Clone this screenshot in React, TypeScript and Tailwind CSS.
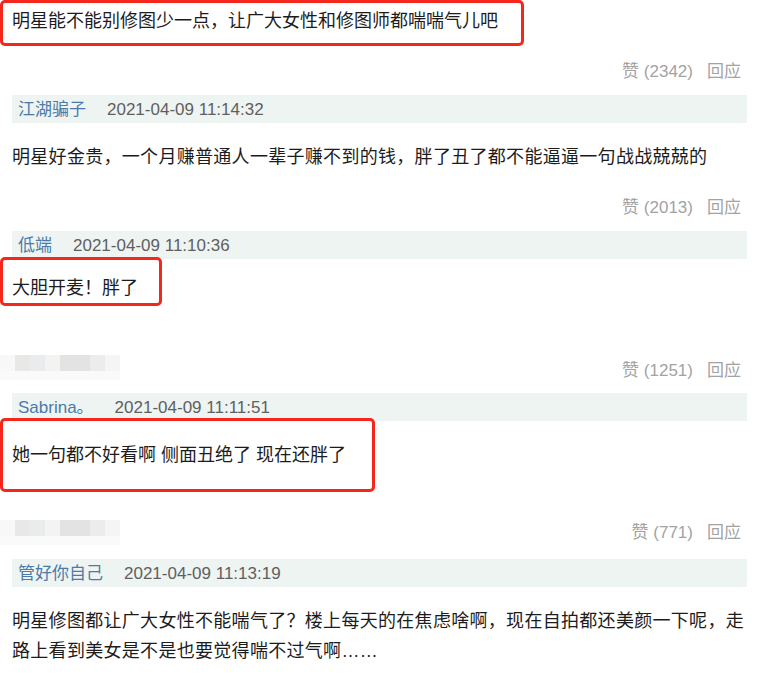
import React from "react";

const font = { fontFamily: '"Liberation Sans", "Noto Sans CJK SC", sans-serif' };

function Likes({ count }: { count: string }) {
  return (
    <div className="flex h-[20px] items-center gap-[14px] text-[17px] leading-none text-[#a3a3a3]">
      <span>赞 ({count})</span>
      <span>回应</span>
    </div>
  );
}

function Bar({ name, time }: { name: string; time: string }) {
  return (
    <div className="ml-[12px] flex h-[28px] w-[735px] items-center gap-[21px] bg-[#eef4f1] pl-[6px] text-[17px] leading-none">
      <span className="text-[#4b7bab]">{name}</span>
      <span className="text-[#5f5f5f]">{time}</span>
    </div>
  );
}

function Mosaic() {
  const top = ["#f8f8f8", "#e8e8e6", "#eaebed", "#f3f3f1", "#e3e3e3", "#e3e3e3", "#ececec", "#f4f5f4"];
  return (
    <div className="mt-[3px] flex flex-col">
      <div className="flex h-[16px]">
        {top.map((c, i) => (
          <div key={i} className="h-full w-[15px]" style={{ background: c }} />
        ))}
      </div>
      <div className="h-[9px] w-[120px] bg-[#fafafa]" />
    </div>
  );
}

export default function App() {
  return (
    <div className="h-[676px] w-[765px] overflow-hidden bg-white text-[#1c1c1c]" style={font}>
      <div className="flex h-[46px] w-[524px] items-center rounded-[5px] border-[3px] border-[#f5261c] pb-[4px] pl-[9px] text-[18px]">
        明星能不能别修图少一点，让广大女性和修图师都喘喘气儿吧
      </div>

      <div className="mt-[15px] flex justify-end pr-[24px]">
        <Likes count="2342" />
      </div>
      <div className="mt-[14px]">
        <Bar name="江湖骗子" time="2021-04-09 11:14:32" />
      </div>
      <div className="mt-[19px] flex h-[30px] items-center pl-[12px] text-[18px] tracking-[0.3px]">
        明星好金贵，一个月赚普通人一辈子赚不到的钱，胖了丑了都不能逼逼一句战战兢兢的
      </div>

      <div className="mt-[25px] flex justify-end pr-[24px]">
        <Likes count="2013" />
      </div>
      <div className="mt-[14px]">
        <Bar name="低端" time="2021-04-09 11:10:36" />
      </div>
      <div className="mt-[-2px] flex h-[49px] w-[162px] items-end rounded-[5px] border-[3px] border-[#f5261c] pb-[1px] pl-[9px] text-[18px]">
        大胆开麦！胖了
      </div>

      <div className="mt-[46px] flex items-start justify-between pr-[24px]">
        <Mosaic />
        <div className="mt-[8px]">
          <Likes count="1251" />
        </div>
      </div>
      <div className="mt-[13px]">
        <Bar name="Sabrina。" time="2021-04-09 11:11:51" />
      </div>
      <div className="mt-[-3px] flex h-[74px] w-[375px] items-center rounded-[5px] border-[3px] border-[#f5261c] pl-[9px] text-[18px]">
        她一句都不好看啊 侧面丑绝了 现在还胖了
      </div>

      <div className="mt-[25px] flex items-start justify-between pr-[24px]">
        <Mosaic />
        <div className="mt-[5px]">
          <Likes count="771" />
        </div>
      </div>
      <div className="mt-[14px]">
        <Bar name="管好你自己" time="2021-04-09 11:13:19" />
      </div>
      <p className="mt-[19px] w-[752px] pl-[12px] text-[18px] leading-[30px] tracking-[0.3px]">
        明星修图都让广大女性不能喘气了？楼上每天的在焦虑啥啊，现在自拍都还美颜一下呢，走路上看到美女是不是也要觉得喘不过气啊……
      </p>
    </div>
  );
}
